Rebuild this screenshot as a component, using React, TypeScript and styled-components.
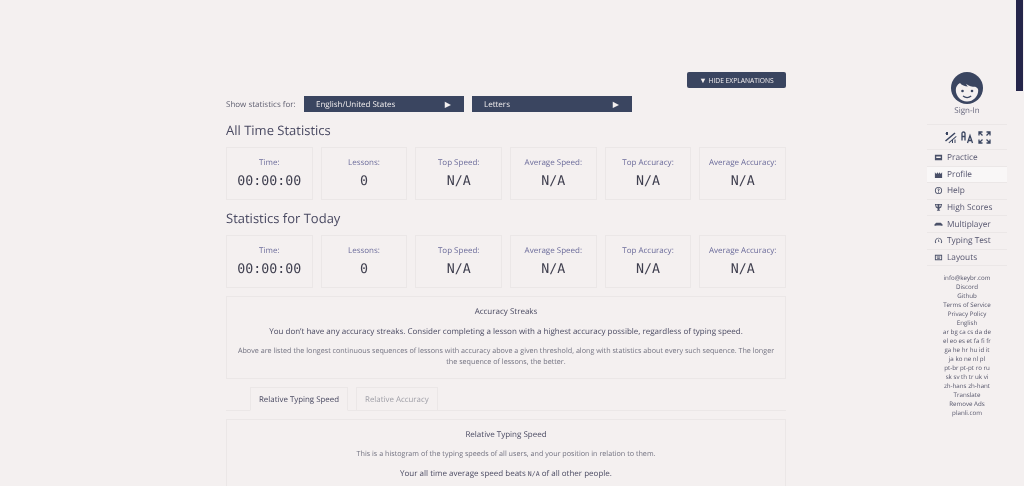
import styled, { createGlobalStyle } from "styled-components";

const GlobalStyle = createGlobalStyle`
  html, body {
    margin: 0;
    padding: 0;
    height: 100%;
    overflow: hidden;
    background-color: #f4f0f0;
  }
  body {
    font-family: "Open Sans", sans-serif;
    color: #424264;
    text-rendering: geometricPrecision;
  }
`;

const stats = [
  { label: "Time:", value: "00:00:00" },
  { label: "Lessons:", value: "0" },
  { label: "Top Speed:", value: "N/A" },
  { label: "Average Speed:", value: "N/A" },
  { label: "Top Accuracy:", value: "N/A" },
  { label: "Average Accuracy:", value: "N/A" },
];

const navItems = [
  { name: "Practice", icon: "M1 2h8v6H1zM2.500 4h5v1.500h-5z" },
  { name: "Profile", icon: "M1 9V2.500l1.500 2L4 2.500l1 2 1-2 1.500 2L9 2.500V9z" },
  { name: "Help", icon: "M5 1a4 4 0 1 0 0 8 4 4 0 0 0 0-8zm0 1a3 3 0 1 1 0 6 3 3 0 0 1 0-6zM3.800 4a1.200 1.200 0 1 1 1.700 1.100v.9h-1V4.600c.5 0 .7-.2.7-.6s-.5-.5-.7 0zM4.500 6.600h1v.8h-1z" },
  { name: "High Scores", icon: "M1 1h8L8 5 6 6v1.500l1 1H3l1-1V6L2 5zM2.300 2l.7 2.300.9.5V2zM7.700 2H6v2.800l.9-.5z" },
  { name: "Multiplayer", icon: "M.500 5L2.500 3h5l2 2v1.500h-2V6h-5v.5h-2z" },
  { name: "Typing Test", icon: "M1.500 8a4 4 0 1 1 7 0L7.500 7.400a3 3 0 1 0-5 0zM4.500 6.500L5 3l1 3.500z" },
  { name: "Layouts", icon: "M1 2h8v6H1zM2 3v4h6V3zM3 4h4v1H3zM3.500 5.500h3v.8h-3z" },
];

const footerLines = [
  "info@keybr.com",
  "Discord",
  "Github",
  "Terms of Service",
  "Privacy Policy",
  "English",
  "ar bg ca cs da de",
  "el eo es et fa fi fr",
  "ga he hr hu id it",
  "ja ko ne nl pl",
  "pt-br pt-pt ro ru",
  "sk sv th tr uk vi",
  "zh-hans zh-hant",
  "Translate",
  "Remove Ads",
  "planli.com",
];

const StatsRow = () => (
  <StatGrid>
    {stats.map((s) => (
      <StatCard key={s.label}>
        <StatLabel>{s.label}</StatLabel>
        <StatValue>{s.value}</StatValue>
      </StatCard>
    ))}
  </StatGrid>
);

const App = () => {
  return (
    <Viewport>
      <GlobalStyle />
      <Page>
        <Main>
          <ToolRow>
            <HideButton>
              <ButtonArrow>▼</ButtonArrow> HIDE EXPLANATIONS
            </HideButton>
          </ToolRow>
          <FilterRow>
            <FilterLabel>Show statistics for:</FilterLabel>
            <Select>
              <span>English/United States</span>
              <Arrow>▶</Arrow>
            </Select>
            <Select>
              <span>Letters</span>
              <Arrow>▶</Arrow>
            </Select>
          </FilterRow>
          <Heading>All Time Statistics</Heading>
          <StatsRow />
          <Heading>Statistics for Today</Heading>
          <StatsRow />
          <Box $height={83}>
            <BoxTitle>Accuracy Streaks</BoxTitle>
            <BoxText>
              You don’t have any accuracy streaks. Consider completing a lesson with a highest accuracy possible,
              regardless of typing speed.
            </BoxText>
            <BoxNote>
              Above are listed the longest continuous sequences of lessons with accuracy above a given threshold, along
              with statistics about every such sequence. The longer the sequence of lessons, the better.
            </BoxNote>
          </Box>
          <Tabs>
            <Tab $active>Relative Typing Speed</Tab>
            <Tab>Relative Accuracy</Tab>
          </Tabs>
          <Box $height={120}>
            <BoxTitle>Relative Typing Speed</BoxTitle>
            <BoxNote>This is a histogram of the typing speeds of all users, and your position in relation to them.</BoxNote>
            <BoxText $gap={8}>
              Your all time average speed beats <Mono>N/A</Mono> of all other people.
            </BoxText>
          </Box>
        </Main>
        <Sidebar>
          <Avatar viewBox="0 0 32 32">
            <circle cx="16" cy="16" r="16" fill="#3a4560" />
            <path
              d="M4.800 18c0-3 1.500-5.500 4.200-7 1.500 2 5 3.500 8 3.500-1-.8-1.500-1.500-1.800-2.500 2.500 2 6 2.800 9 2.800 2 1 3 2 3 3.700 0 6-4.800 11-11.200 11S4.800 24 4.800 18z"
              fill="#f4f0f0"
            />
            <circle cx="11.500" cy="19" r="1.300" fill="#3a4560" />
            <circle cx="21" cy="19" r="1.300" fill="#3a4560" />
            <path d="M12 24c2.400 1.800 5.800 1.800 8.200 0" fill="none" stroke="#3a4560" strokeWidth="1.200" />
          </Avatar>
          <SignIn>Sign-In</SignIn>
          <IconRow>
            <svg width="13" height="13" viewBox="0 0 13 13" fill="#3a4560">
              <path d="M1 9.500l9.500-8 1 1-9.500 8zM4.500 11.500l7.500-6.500.6.800-7.500 6.500zM2 1h2v3H2zM1.500 2h1.500v.8H1.500zM8 8.500h1v3.500H8zM10.500 8.500h1v3.500h-1z" />
            </svg>
            <svg width="13" height="13" viewBox="0 0 13 13" fill="none" stroke="#3a4560" strokeWidth="1.300">
              <path d="M1 9.500V2.500Q1 1 2.500 1t1.500 1.500v7M1 5.500h3M6.500 12l2.500-7.500 2.500 7.500M7.500 9.500h3.500" />
            </svg>
            <svg width="13" height="13" viewBox="0 0 13 13" fill="none" stroke="#3a4560" strokeWidth="1.300">
              <path d="M1 4.500V1h3.500M12 4.500V1H8.500M1 8.500V12h3.500M12 8.500V12H8.500M1.500 1.500l3 3M11.500 1.500l-3 3M1.500 11.500l3-3M11.500 11.500l-3-3" />
            </svg>
          </IconRow>
          <Nav>
            {navItems.map((item) => (
              <NavItem key={item.name} $active={item.name === "Profile"}>
                <NavIcon viewBox="0 0 10 10">
                  <path d={item.icon} fillRule="evenodd" />
                </NavIcon>
                {item.name}
              </NavItem>
            ))}
          </Nav>
          <Footer>
            {footerLines.map((line) => (
              <div key={line}>{line}</div>
            ))}
          </Footer>
        </Sidebar>
      </Page>
      <ScrollThumb />
    </Viewport>
  );
};

export default App;

const Viewport = styled.div`
  position: relative;
  height: 100vh;
  overflow: hidden;
`;

const ScrollThumb = styled.div`
  position: absolute;
  top: 0;
  right: 1px;
  width: 7px;
  height: 91px;
  background-color: #25254a;
`;

const Page = styled.div`
  display: flex;
  box-sizing: border-box;
  padding: 72px 17px 0 226px;
  justify-content: space-between;
  filter: blur(0.3px);
`;

const Main = styled.div`
  width: 560px;
  display: flex;
  flex-direction: column;
`;

const ToolRow = styled.div`
  display: flex;
  justify-content: flex-end;
  margin-bottom: 8px;
`;

const HideButton = styled.button`
  width: 99px;
  height: 16px;
  padding: 0;
  border: none;
  border-radius: 2px;
  background-color: #3a4560;
  color: #f4f0f0;
  font-family: "Open Sans", sans-serif;
  font-size: 6.700px;
  font-weight: 400;
`;

const ButtonArrow = styled.span`
  font-size: 7.500px;
`;

const FilterRow = styled.div`
  display: flex;
  align-items: center;
  height: 16px;
`;

const FilterLabel = styled.div`
  width: 78px;
  font-size: 8px;
  color: #5f5f70;
`;

const Select = styled.div`
  width: 160px;
  height: 16px;
  margin-right: 8px;
  padding: 0 12px;
  box-sizing: border-box;
  display: flex;
  align-items: center;
  justify-content: space-between;
  background-color: #3a4560;
  color: #f4f0f0;
  font-size: 8px;
`;

const Arrow = styled.span`
  font-size: 8px;
  margin-right: 1px;
`;

const Heading = styled.h2`
  margin: 0;
  height: 35px;
  line-height: 37px;
  font-size: 13px;
  font-weight: 400;
  color: #4a4a62;
`;

const StatGrid = styled.div`
  display: grid;
  grid-template-columns: repeat(6, 1fr);
  gap: 8px;
`;

const StatCard = styled.div`
  height: 53px;
  box-sizing: border-box;
  border: 1px solid #ebe7e7;
  padding-top: 9px;
  text-align: center;
`;

const StatLabel = styled.div`
  font-size: 8px;
  line-height: 11px;
  color: #6b6b9a;
`;

const StatValue = styled.div`
  margin-top: 5px;
  font-family: "DejaVu Sans Mono", monospace;
  font-size: 13.300px;
  line-height: 18px;
  color: #3f3f4f;
`;

const Box = styled.div<{ $height: number }>`
  height: ${(p) => p.$height}px;
  flex-shrink: 0;
  margin-top: 8px;
  box-sizing: border-box;
  border: 1px solid #ebe7e7;
  padding: 9px 5px 0;
  text-align: center;
`;

const BoxTitle = styled.div`
  font-size: 8px;
  line-height: 11px;
  color: #4a4a62;
`;

const BoxText = styled.div<{ $gap?: number }>`
  margin-top: ${(p) => p.$gap ?? 9}px;
  font-size: 8px;
  line-height: 11px;
  color: #4a4a62;
`;

const BoxNote = styled.div`
  margin-top: 9px;
  font-size: 7.200px;
  line-height: 10.500px;
  color: #727280;
`;

const Mono = styled.span`
  font-family: "DejaVu Sans Mono", monospace;
  font-size: 6.500px;
`;

const Tabs = styled.div`
  display: flex;
  gap: 8px;
  height: 23px;
  flex-shrink: 0;
  margin-top: 8px;
  padding-left: 24px;
  border-bottom: 1px solid #ebe7e7;
`;

const Tab = styled.div<{ $active?: boolean }>`
  height: 24px;
  box-sizing: border-box;
  padding: 1px 8px 0;
  display: flex;
  align-items: center;
  border: 1px solid #ebe7e7;
  font-size: 7.900px;
  color: ${(p) => (p.$active ? "#4a4a62" : "#a0a0a8")};
  border-bottom-color: ${(p) => (p.$active ? "#f4f0f0" : "#ebe7e7")};
`;

const Sidebar = styled.div`
  width: 80px;
  display: flex;
  flex-direction: column;
  align-items: center;
`;

const Avatar = styled.svg`
  width: 32px;
  height: 32px;
  flex-shrink: 0;
`;

const SignIn = styled.div`
  height: 21px;
  width: 100%;
  box-sizing: border-box;
  border-bottom: 1px solid #ebe7e7;
  text-align: center;
  font-size: 8px;
  line-height: 13px;
  color: #66667c;
`;

const IconRow = styled.div`
  width: 100%;
  height: 25px;
  box-sizing: border-box;
  display: flex;
  align-items: center;
  justify-content: center;
  gap: 4px;
  border-bottom: 1px solid #ebe7e7;
`;

const Nav = styled.div`
  width: 100%;
`;

const NavItem = styled.div<{ $active?: boolean }>`
  height: 16.600px;
  box-sizing: border-box;
  display: flex;
  align-items: center;
  gap: 4px;
  padding-left: 7px;
  border-bottom: 1px solid #ebe7e7;
  font-size: 8.300px;
  color: #55556e;
  background-color: ${(p) => (p.$active ? "#f9f7f7" : "transparent")};
`;

const NavIcon = styled.svg`
  width: 9px;
  height: 9px;
  fill: #4a5068;
`;

const Footer = styled.div`
  margin-top: 7px;
  text-align: center;
  font-size: 6.200px;
  line-height: 9px;
  color: #55556a;
`;
